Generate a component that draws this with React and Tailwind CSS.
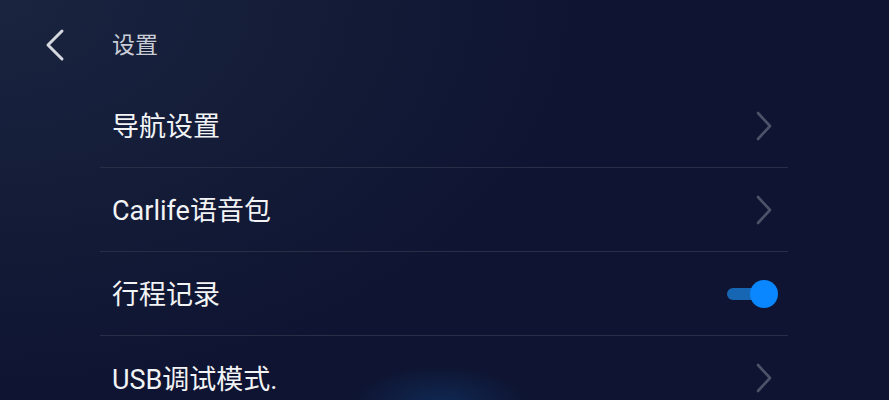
import React from "react";

const font = { fontFamily: '"Roboto", "Noto Sans CJK SC", sans-serif' };

function ChevronRight() {
  return (
    <svg width="20" height="30" viewBox="0 0 20 30" className="shrink-0">
      <path d="M4 2 L16 15 L4 28" fill="none" stroke="#4c5368" strokeWidth="2.6" strokeLinecap="round" strokeLinejoin="round" />
    </svg>
  );
}

function Toggle() {
  return (
    <div className="relative w-[52px] h-[28px] flex items-center">
      <div className="ml-[1px] w-[36px] h-[12px] rounded-full bg-[#1766b4]" />
      <div className="absolute right-[0px] top-0 w-[28px] h-[28px] rounded-full bg-[#0a86ff]" />
    </div>
  );
}

function Row({ label, right, last, rightPad }) {
  return (
    <div className={"h-[84px] flex items-center justify-between pl-[12px] " + rightPad + " " + (last ? "" : "border-b border-[#272e45]")}>
      <span className="text-[27px] text-[#f2f3f5] leading-none pt-[4px]">{label}</span>
      <div className="flex items-center justify-end w-[60px]">{right}</div>
    </div>
  );
}

export default function App() {
  return (
    <div
      className="w-[889px] h-[400px] overflow-hidden relative bg-[#0e1431]"
      style={font}
    >
      <div className="absolute inset-0 bg-[radial-gradient(ellipse_600px_400px_at_0%_0%,#1a243f_0%,rgba(27,37,64,0)_100%)]" />
      <div className="absolute inset-0 bg-[radial-gradient(ellipse_90px_40px_at_440px_405px,rgba(20,80,150,0.35)_0%,rgba(20,80,150,0)_100%)]" />
      <div className="relative flex flex-col">
        <div className="h-[84px] flex items-center pt-[6px]">
          <div className="w-[112px] pl-[43px] flex items-center">
            <svg width="24" height="34" viewBox="0 0 24 34">
              <path d="M19 3 L5 17 L19 31" fill="none" stroke="#d5d8df" strokeWidth="3" strokeLinecap="round" strokeLinejoin="round" />
            </svg>
          </div>
          <span className="text-[23px] text-[#c9cdd6] leading-none">设置</span>
        </div>
        <div className="ml-[100px] w-[688px] flex flex-col">
          <Row label="导航设置" right={<ChevronRight />} rightPad="pr-[14px]" />
          <Row label="Carlife语音包" right={<ChevronRight />} rightPad="pr-[14px]" />
          <Row label="行程记录" right={<Toggle />} rightPad="pr-[10px]" />
          <Row label="USB调试模式." right={<ChevronRight />} rightPad="pr-[14px]" last />
        </div>
      </div>
    </div>
  );
}
